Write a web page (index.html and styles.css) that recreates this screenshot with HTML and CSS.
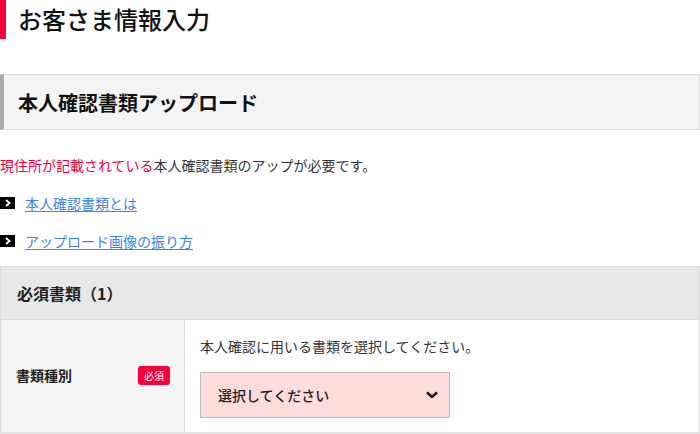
FILE: index.html
```html
<!DOCTYPE html>
<html lang="ja">
<head>
<meta charset="utf-8">
<link rel="stylesheet" href="styles.css">
</head>
<body>
<h1 class="page-title">お客さま情報入力</h1>
<section class="section">
  <h2 class="section-title">本人確認書類アップロード</h2>
  <p class="notice"><span class="em">現住所が記載されている</span>本人確認書類のアップが必要です。</p>
  <ul class="links">
    <li><span class="arrow"><svg width="8" height="8" viewBox="0 0 8 8"><path d="M2 1 L5.5 4 L2 7" fill="none" stroke="#fff" stroke-width="1.8"/></svg></span><a href="#">本人確認書類とは</a></li>
    <li><span class="arrow"><svg width="8" height="8" viewBox="0 0 8 8"><path d="M2 1 L5.5 4 L2 7" fill="none" stroke="#fff" stroke-width="1.8"/></svg></span><a href="#">アップロード画像の振り方</a></li>
  </ul>
  <div class="doc-table">
    <div class="doc-head">必須書類（1）</div>
    <div class="doc-row">
      <div class="doc-label"><span>書類種別</span><span class="badge">必須</span></div>
      <div class="doc-field">
        <p class="field-note">本人確認に用いる書類を選択してください。</p>
        <div class="select">
          <span>選択してください</span>
          <svg width="14" height="10" viewBox="0 0 14 10"><path d="M2 2.5 L7 7 L12 2.5" fill="none" stroke="#111" stroke-width="2.4"/></svg>
        </div>
      </div>
    </div>
  </div>
</section>
</body>
</html>
```
FILE: styles.css
```css
* { box-sizing: border-box; }
body {
  margin: 0;
  font-family: "Noto Sans CJK JP", "Noto Sans", sans-serif;
  color: #222;
  background: #fff;
}
.page-title {
  margin: 0;
  height: 39px;
  line-height: 37px;
  border-left: 6px solid #f5003c;
  padding-left: 12px;
  font-size: 24px;
  font-weight: 500;
  color: #111;
}
.section { margin-top: 35px; }
.section-title {
  margin: 0;
  height: 56px;
  display: flex;
  align-items: center;
  background: #f4f4f4;
  border: 1px solid #dcdcdc;
  border-left: 4px solid #aaa;
  padding-left: 14px;
  font-size: 20px;
  font-weight: 700;
  color: #111;
}
.notice {
  margin: 25px 0 0;
  font-size: 14px;
  line-height: 20px;
  color: #333;
}
.notice .em { color: #f5003c; }
.links {
  list-style: none;
  margin: 9px 0 0;
  padding: 0;
}
.links li {
  display: flex;
  align-items: center;
  height: 38px;
  font-size: 14px;
}
.arrow {
  width: 15px;
  height: 12px;
  background: #000;
  display: inline-flex;
  align-items: center;
  justify-content: center;
  margin-right: 10px;
}
.links a {
  color: #3b84e2;
  text-decoration: underline;
  text-underline-offset: 2px;
}
.doc-table {
  margin-top: 6px;
  border: 1px solid #dcdcdc;
  border-bottom: 2px solid #e4e4e4;
}
.doc-head {
  height: 53px;
  display: flex;
  align-items: center;
  padding-left: 16px;
  background: #e8e8e8;
  border-bottom: 1px solid #dcdcdc;
  font-size: 16px;
  font-weight: 700;
  color: #222;
}
.doc-row {
  display: flex;
  height: 112px;
}
.doc-label {
  width: 184px;
  background: #f4f4f4;
  border-right: 1px solid #dcdcdc;
  display: flex;
  align-items: center;
  justify-content: space-between;
  padding: 0 14px 2px 15px;
  font-size: 14px;
  font-weight: 700;
  color: #222;
}
.badge {
  background: #f5003c;
  color: #fff;
  font-size: 10px;
  font-weight: 400;
  border-radius: 3px;
  width: 32px;
  height: 19px;
  display: inline-flex;
  align-items: center;
  justify-content: center;
}
.doc-field {
  flex: 1;
  padding: 17px 15px 0 15px;
}
.field-note {
  margin: 0;
  font-size: 14px;
  line-height: 18px;
  color: #333;
}
.select {
  margin-top: 17px;
  width: 250px;
  height: 46px;
  background: #ffdcdc;
  border: 1px solid #bdbdbd;
  display: flex;
  align-items: center;
  justify-content: space-between;
  padding: 0 10px 0 17px;
  font-size: 14px;
  font-weight: 500;
  color: #222;
}
```
